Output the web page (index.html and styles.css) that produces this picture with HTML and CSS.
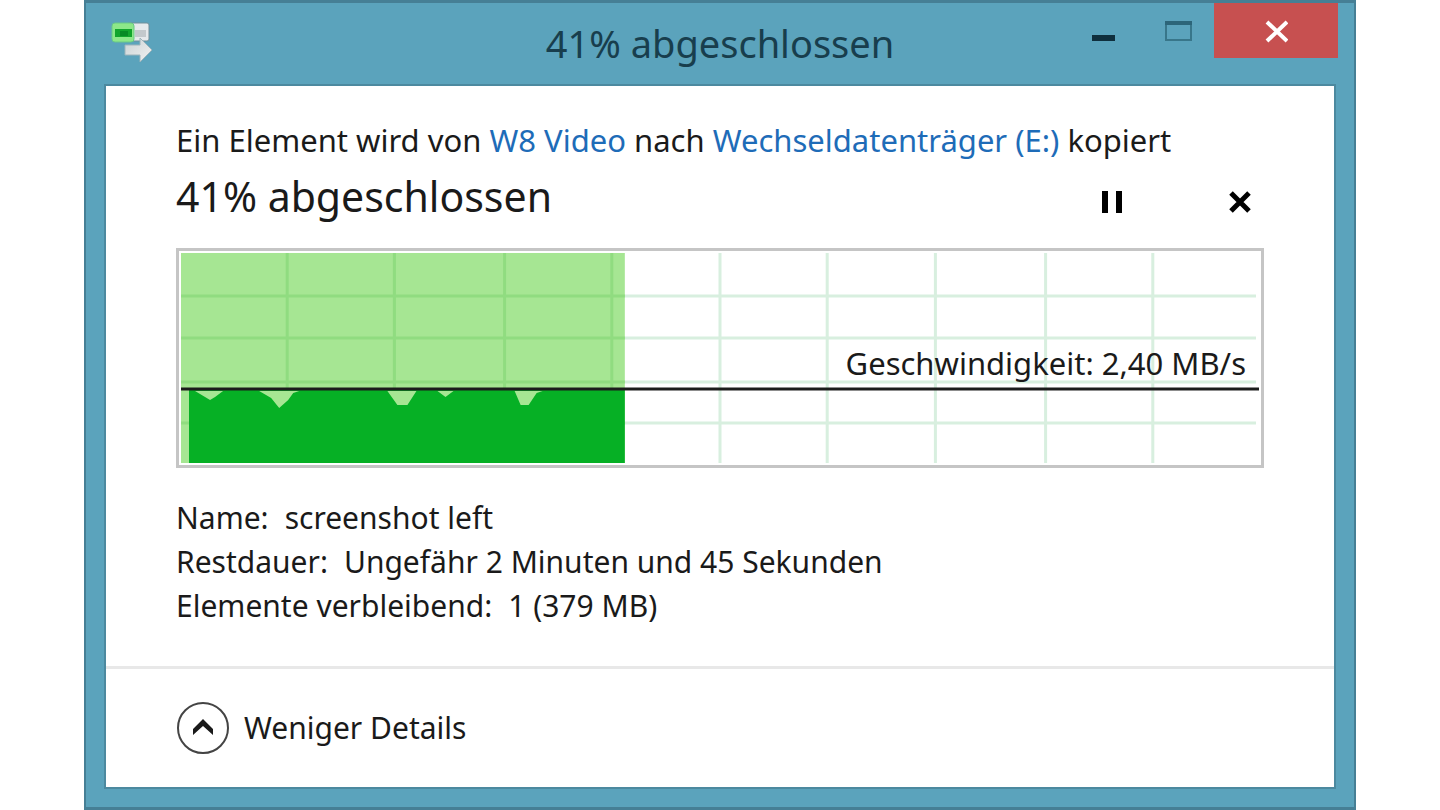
FILE: index.html
```
<!DOCTYPE html>
<html lang="de">
<head>
    <meta charset="UTF-8">
    <meta name="viewport" content="width=device-width, initial-scale=1.0">
    <title>41% abgeschlossen</title>
    <link rel="stylesheet" href="styles.css">
</head>
<body>
    <div class="window">
        <!-- Title bar -->
        <header class="titlebar">
            <svg class="app-icon" width="48" height="44" viewBox="0 0 48 44" aria-hidden="true">
                <defs>
                    <linearGradient id="arrowFill" x1="0" y1="0" x2="1" y2="1">
                        <stop offset="0" stop-color="#c9d2d4"/>
                        <stop offset="1" stop-color="#f2f2f2"/>
                    </linearGradient>
                </defs>
                <rect x="20" y="5" width="22" height="18" rx="2" fill="#e6eaec" stroke="#718f99"/>
                <rect x="28" y="12" width="11" height="7" fill="#c3c9cc"/>
                <rect x="5" y="5" width="22" height="19" rx="3" fill="#8de889" stroke="#68c986"/>
                <rect x="8" y="11" width="17" height="8" fill="#12a52c"/>
                <rect x="13" y="13" width="8" height="5" fill="#078a24"/>
                <path d="M18 27h15v-7l12 12-12 12v-7H18z" fill="url(#arrowFill)" stroke="#9db4bb"/>
            </svg>
            <h1>41% abgeschlossen</h1>
            <div class="window-buttons">
                <button type="button" class="win-btn" aria-label="Minimieren">
                    <svg width="30" height="24" viewBox="0 0 30 24"><rect x="4" y="16" width="23" height="6" fill="#0f2f3d"/></svg>
                </button>
                <button type="button" class="win-btn" aria-label="Maximieren">
                    <svg width="30" height="24" viewBox="0 0 30 24"><path d="M4 3h25v18H4z" fill="none" stroke="#38768a" stroke-width="2"/><path d="M3 4h27" stroke="#2c6579" stroke-width="4"/></svg>
                </button>
                <button type="button" class="win-btn close" aria-label="Schließen">
                    <svg width="24" height="24" viewBox="0 0 24 24"><path d="M3 3l20 19M23 3L3 22" stroke="#fff" stroke-width="4"/></svg>
                </button>
            </div>
        </header>

        <!-- Window content -->
        <main class="content">
            <section class="progress">
                <p>Ein Element wird von <a href="#">W8 Video</a> nach <a href="#">Wechseldatenträger (E:)</a> kopiert</p>
                <div class="status">
                    <h2>41% abgeschlossen</h2>
                    <div class="controls">
                        <button type="button" aria-label="Pause">
                            <svg width="24" height="24" viewBox="0 0 24 24"><path d="M5 1v22M19 1v22" stroke="#000" stroke-width="6"/></svg>
                        </button>
                        <button type="button" aria-label="Abbrechen">
                            <svg width="24" height="24" viewBox="0 0 24 24"><path d="M3 3l18 18M21 3L3 21" stroke="#000" stroke-width="5"/></svg>
                        </button>
                    </div>
                </div>

                <div class="chart">
                    <svg class="graph" viewBox="0 0 1076 210" preserveAspectRatio="none" aria-hidden="true">
                        <path class="grid" d="M106 0v210M213 0v210M323 0v210M430 0v210M538 0v210M645 0v210M753 0v210M863 0v210M970 0v210M0 43h1073M0 85h1073M0 129h1073M0 170h1073"/>
                        <rect class="done" width="443" height="210"/>
                        <path class="done-grid" d="M106 0v210M213 0v210M323 0v210M430 0v210M0 43h443M0 85h443M0 129h443M0 170h443"/>
                        <path class="speed" d="M8 210V136H443V210z"/>
                        <path class="dip" d="M14 138L24 144 29 147 34 144 42 138zM78 138L90 145 98 155 107 147 112 140 118 138zM206 138L216 152H226L235 138zM256 138L264 144 272 138zM333 138L339 152H347L355 140 361 138z"/>
                        <path class="current" d="M0 136H1076"/>
                    </svg>
                    <span class="speed-label">Geschwindigkeit: 2,40 MB/s</span>
                </div>

                <dl class="details">
                    <div><dt>Name:</dt><dd>screenshot left</dd></div>
                    <div><dt>Restdauer:</dt><dd>Ungefähr 2 Minuten und 45 Sekunden</dd></div>
                    <div><dt>Elemente verbleibend:</dt><dd>1 (379 MB)</dd></div>
                </dl>
            </section>

            <footer>
                <button type="button" class="toggle">
                    <svg width="54" height="54" viewBox="0 0 54 54" aria-hidden="true">
                        <circle cx="27" cy="27" r="25" fill="#fff" stroke="#444" stroke-width="2"/>
                        <path d="M17 34v-6l10-10 10 10v6l-10-9z" fill="#1a1a1a"/>
                    </svg>
                    <span>Weniger Details</span>
                </button>
            </footer>
        </main>
    </div>
</body>
</html>
```
FILE: styles.css
```
/* Basic reset */
* {
    margin: 0;
    padding: 0;
    box-sizing: border-box;
}

body {
    background-color: #fff;
    color: #1a1a1a;
    font-family: "Noto Sans", "Open Sans", sans-serif;
    font-size: 30px;
    line-height: 44px;
}

button {
    border: none;
    background: none;
    color: inherit;
    font: inherit;
    cursor: pointer;
}

svg {
    display: block;
}

/* Window frame */
.window {
    display: flex;
    flex-direction: column;
    min-height: 100vh;
    margin: 0 84px;
    padding: 0 18px 18px;
    background-color: #5ba3bc;
    border: 2px solid #467f95;
    border-width: 3px 2px;
}

/* Title bar */
.titlebar {
    display: grid;
    grid-template-columns: 1fr auto 1fr;
    height: 81px;
}

.app-icon {
    margin: 15px 0 0 3px;
}

h1 {
    font-size: 38px;
    font-weight: normal;
    line-height: 80px;
    color: #183e4d;
}

.window-buttons {
    display: flex;
    justify-content: flex-end;
    margin-right: -2px;
}

.win-btn {
    display: flex;
    align-items: center;
    justify-content: center;
    width: 74px;
    height: 55px;
}

.close {
    width: 124px;
    background-color: #c75050;
}

/* Content area */
.content {
    flex: 1;
    display: flex;
    flex-direction: column;
    background-color: #fff;
    border: 2px solid #4c899f;
}

.progress {
    flex: 1;
    padding: 32px 70px 0;
}

.progress p {
    font-size: 31px;
}

a {
    color: #1e6cb8;
    text-decoration: none;
}

.status {
    display: flex;
    justify-content: space-between;
    align-items: center;
    height: 68px;
}

h2 {
    font-size: 41px;
    font-weight: normal;
}

.controls {
    display: flex;
    gap: 104px;
    padding: 12px 12px 0 0;
}

/* Speed chart */
.chart {
    position: relative;
    margin-top: 18px;
    padding: 2px;
    border: 3px solid #c5c5c5;
}

.graph {
    width: 100%;
    height: 210px;
}

.grid {
    stroke: #d8efdf;
    stroke-width: 3;
}

.done {
    fill: #a6e693;
}

.done-grid {
    fill: none;
    stroke: #90dc80;
    stroke-width: 3;
}

.speed {
    fill: #06b025;
}

.dip {
    fill: #a6e693;
}

.current {
    stroke: #1c1c1c;
    stroke-width: 3;
}

.speed-label {
    position: absolute;
    right: 15px;
    top: 90px;
    font-size: 31px;
}

/* File details */
.details {
    margin-top: 28px;
}

.details div {
    display: flex;
    gap: 16px;
}

/* Footer */
footer {
    padding: 32px 70px;
    border-top: 3px solid #e8e8e8;
}

.toggle {
    display: flex;
    align-items: center;
    gap: 14px;
}
```
